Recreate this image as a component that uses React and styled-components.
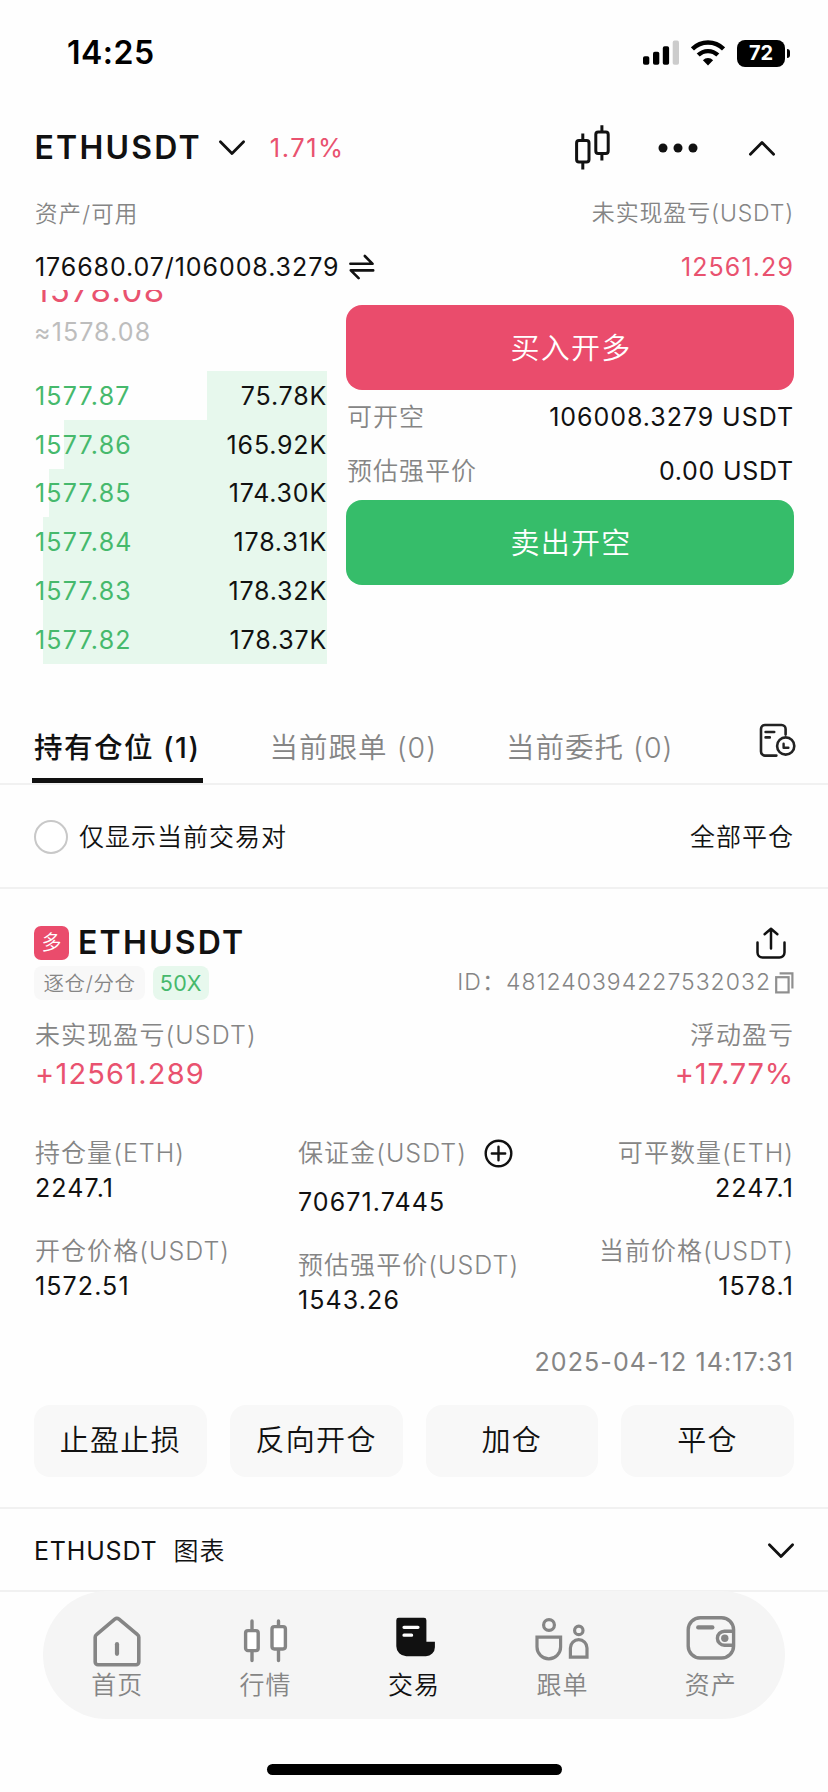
import React, { useState } from "react";
import styled, { createGlobalStyle } from "styled-components";

const bids = [
    { price: "1577.87", amount: "75.78K", depth: 120 },
    { price: "1577.86", amount: "165.92K", depth: 263.5 },
    { price: "1577.85", amount: "174.30K", depth: 278 },
    { price: "1577.84", amount: "178.31K", depth: 284 },
    { price: "1577.83", amount: "178.32K", depth: 284 },
    { price: "1577.82", amount: "178.37K", depth: 284 },
];

const tabs = ["持有仓位 (1)", "当前跟单 (0)", "当前委托 (0)"];

const actions = ["止盈止损", "反向开仓", "加仓", "平仓"];

const Chevron = ({ up }) => (
    <svg width="28" height="18" viewBox="0 0 28 18" fill="none" stroke="#111" strokeWidth="2.8" strokeLinecap="round" strokeLinejoin="round">
        <path d={up ? "M2.4 15.2L14 3.4L25.6 15.2" : "M2.4 2.8L14 14.6L25.6 2.8"} />
    </svg>
);

const SignalIcon = () => (
    <svg width="36" height="26" viewBox="0 0 36 26">
        <rect x="0" y="16.3" width="6.3" height="8.4" rx="1.8" />
        <rect x="10" y="11.7" width="6.3" height="13" rx="1.8" />
        <rect x="19.8" y="6.2" width="6.3" height="18.5" rx="1.8" />
        <rect x="29.7" y="0.6" width="6.3" height="24.1" rx="1.8" fill="#ccc" />
    </svg>
);

const WifiIcon = () => (
    <svg width="34" height="26" viewBox="0 0 34 26" fill="none" stroke="#000" strokeWidth="4.3">
        <path d="M1.5 8.9a22 22 0 0 1 31 0" />
        <path d="M7.2 15.1a13.9 13.9 0 0 1 19.6 0" />
        <path d="M17 25.4L11.9 20.2a7.2 7.2 0 0 1 10.2 0z" fill="#000" stroke="none" />
    </svg>
);

const KlineIcon = () => (
    <svg width="36" height="46" viewBox="0 0 36 46" fill="none" stroke="#111" strokeWidth="3" strokeLinejoin="round">
        <rect x="2.6" y="15.6" width="12.4" height="21.4" rx="2.4" />
        <path d="M8.8 8.6v7M8.8 37v7.4M27.9 0.2v6.8M27.9 28.4v7.2" />
        <rect x="21.8" y="7" width="12.4" height="21.4" rx="2.4" />
    </svg>
);

const DotsIcon = () => (
    <svg width="40" height="10" viewBox="0 0 40 10" fill="#111">
        <circle cx="5" cy="5" r="4.5" />
        <circle cx="20" cy="5" r="4.5" />
        <circle cx="35" cy="5" r="4.5" />
    </svg>
);

const SwapIcon = () => (
    <svg width="26" height="26" viewBox="0 0 26 26" fill="none" stroke="#111" strokeWidth="2.6" strokeLinecap="round" strokeLinejoin="round">
        <path d="M1.4 9.8H23.6L15.8 2" />
        <path d="M24.2 16.4H1.8L9.6 24.2" />
    </svg>
);

const HistoryIcon = () => (
    <svg width="37" height="35" viewBox="0 0 37 35" fill="none" stroke="#222" strokeWidth="2.6" strokeLinecap="round" strokeLinejoin="round">
        <path d="M17.4 32.6H6a4 4 0 0 1-4-4V6a4 4 0 0 1 4-4h16.6a4 4 0 0 1 4 4v5.6" />
        <path d="M6.6 9h8.6M6.6 14.4h4.2" />
        <circle cx="26.7" cy="23" r="8.6" />
        <path d="M24.6 20.8v4h4.8" strokeWidth="2.4" />
    </svg>
);

const ShareIcon = () => (
    <svg width="30" height="33" viewBox="0 0 30 33" fill="none" stroke="#111" strokeWidth="2.5" strokeLinecap="round" strokeLinejoin="round">
        <path d="M1.5 15.4v10.2a5 5 0 0 0 5 5h17a5 5 0 0 0 5-5V15.4" />
        <path d="M15 21.4V2.2M8.6 7.2L15 1.8L21.4 7.2" />
    </svg>
);

const CopyIcon = () => (
    <svg width="19" height="22" viewBox="0 0 19 22" fill="none" stroke="#8f8f8f" strokeWidth="2.2">
        <rect x="1.2" y="5.2" width="12.4" height="15.2" />
        <path d="M4.6 1.4H17.4V16.6" />
    </svg>
);

const PlusIcon = () => (
    <svg width="29" height="29" viewBox="0 0 29 29" fill="none" stroke="#111" strokeWidth="2.4" strokeLinecap="round">
        <circle cx="14.5" cy="14.5" r="12.8" />
        <path d="M7.8 14.5h13.4M14.5 7.8v13.4" />
    </svg>
);

const HomeIcon = () => (
    <svg width="48" height="52" viewBox="0 0 48 52" fill="none" stroke="#858585" strokeWidth="3.6" strokeLinejoin="round" strokeLinecap="round">
        <path d="M2.2 22.4a3.4 3.4 0 0 1 1.3-2.7L21.8 4.2a3.2 3.2 0 0 1 4.2 0L44.5 19.7a3.4 3.4 0 0 1 1.3 2.7v24.6a2.8 2.8 0 0 1-2.8 2.8H5a2.8 2.8 0 0 1-2.8-2.8z" />
        <path d="M24 29.2v9.6" strokeWidth="4.2" />
    </svg>
);

const MarketIcon = () => (
    <svg width="48" height="52" viewBox="0 0 48 52" fill="#fff" stroke="#858585" strokeWidth="3.4">
        <path d="M10 6v10M10 36v9.6M36.5 6v6M36.5 35v10.6" strokeLinecap="round" />
        <rect x="3.6" y="15.6" width="12.6" height="20" rx="2.4" />
        <rect x="30" y="11.6" width="13.4" height="22.4" rx="2.4" />
    </svg>
);

const TradeIcon = () => (
    <svg width="48" height="52" viewBox="0 0 48 52" fill="#111">
        <path d="M6.3 5.2a2.4 2.4 0 0 1 2.4-2.4H34a2.4 2.4 0 0 1 2.4 2.4v21.6h8.5v5.4a9 9 0 0 1-9 9H16.3a10 10 0 0 1-10-10z" />
        <path d="M14 12.3h14M14 20.2h7.6" stroke="#fff" strokeWidth="3.2" strokeLinecap="round" />
    </svg>
);

const FollowIcon = () => (
    <svg width="54" height="52" viewBox="0 0 54 52" fill="none" stroke="#858585" strokeWidth="3.2">
        <circle cx="14" cy="10" r="5.4" />
        <path d="M2 22.2H25.6V32a11.8 11.8 0 0 1-23.6 0z" />
        <circle cx="43.8" cy="15.4" r="4.2" />
        <path d="M35.4 42.2V33a8.3 8.3 0 0 1 16.6 0v9.2z" />
    </svg>
);

const WalletIcon = () => (
    <svg width="50" height="52" viewBox="0 0 50 52" fill="none" stroke="#858585" strokeWidth="3.4">
        <rect x="2.2" y="2.8" width="45.4" height="40.2" rx="12" />
        <path d="M12.2 12.4h14.2" strokeWidth="4.2" strokeLinecap="round" />
        <path d="M47.6 16.2H38.4a7 7 0 0 0 0 14h9.2" />
        <circle cx="38.8" cy="23.2" r="3.7" fill="#858585" stroke="none" />
    </svg>
);

const navItems = [
    { label: "首页", Icon: HomeIcon },
    { label: "行情", Icon: MarketIcon },
    { label: "交易", Icon: TradeIcon },
    { label: "跟单", Icon: FollowIcon },
    { label: "资产", Icon: WalletIcon },
];

const App = () => {
    const [tab, setTab] = useState(0);
    const [nav, setNav] = useState(2);
    const [onlyPair, setOnlyPair] = useState(false);

    return (
        <>
            <GlobalStyle />
            <Screen>
                <StatusBar>
                    <Clock>14:25</Clock>
                    <div className="icons">
                        <SignalIcon />
                        <WifiIcon />
                        <Battery>72</Battery>
                    </div>
                </StatusBar>

                <Header>
                    <Pair>ETHUSDT</Pair>
                    <Chevron />
                    <Change>1.71%</Change>
                    <div className="tools">
                        <KlineIcon />
                        <DotsIcon />
                        <Chevron up />
                    </div>
                </Header>

                <AssetLabels>
                    <Text $size={22.5} $ls={1.1} $gray className="left">资产/可用</Text>
                    <Text $size={23} $ls={0.85} $gray>未实现盈亏(USDT)</Text>
                </AssetLabels>
                <AssetValues>
                    <div className="total">
                        <Value $ls={0.92}>176680.07/106008.3279</Value>
                        <SwapIcon />
                    </div>
                    <Value $ls={1.1} $color="#e9526f">12561.29</Value>
                </AssetValues>

                <Trade>
                    <Book>
                        <LastPrice>1578.08</LastPrice>
                        <IndexPrice>≈1578.08</IndexPrice>
                        {bids.map(({ price, amount, depth }) => (
                            <Bid key={price}>
                                <Depth style={{ width: depth }} />
                                <Value $ls={1.2} $color="#46b96c">{price}</Value>
                                <Value $ls={0.8}>{amount}</Value>
                            </Bid>
                        ))}
                    </Book>
                    <Order>
                        <OrderButton $color="#ea4c6c">买入开多</OrderButton>
                        <OrderInfo>
                            <Text $gray>可开空</Text>
                            <Value $ls={0.95}>106008.3279 USDT</Value>
                        </OrderInfo>
                        <OrderInfo>
                            <Text $gray>预估强平价</Text>
                            <Value $ls={0.75}>0.00 USDT</Value>
                        </OrderInfo>
                        <OrderButton $color="#36bd6a" className="sell">卖出开空</OrderButton>
                    </Order>
                </Trade>

                <Tabs>
                    {tabs.map((t, i) => (
                        <Tab key={t} $active={tab === i} onClick={() => setTab(i)}>{t}</Tab>
                    ))}
                    <HistoryIcon />
                </Tabs>

                <Filter>
                    <Radio $on={onlyPair} onClick={() => setOnlyPair(!onlyPair)} />
                    <Text>仅显示当前交易对</Text>
                    <Text className="close_all">全部平仓</Text>
                </Filter>

                <Position>
                    <TitleRow>
                        <Side>多</Side>
                        <Pair>ETHUSDT</Pair>
                        <ShareIcon />
                    </TitleRow>
                    <TagRow>
                        <Tag>逐仓/分仓</Tag>
                        <Tag $green>50X</Tag>
                        <div className="order_id">
                            <Text $size={23} $ls={1} $gray>ID：481240394227532032</Text>
                            <CopyIcon />
                        </div>
                    </TagRow>
                    <Spread className="pnl_label">
                        <Text $ls={1.1} $gray>未实现盈亏(USDT)</Text>
                        <Text $gray>浮动盈亏</Text>
                    </Spread>
                    <Spread>
                        <Profit $ls={1.2}>+12561.289</Profit>
                        <Profit $ls={0.8}>+17.77%</Profit>
                    </Spread>
                    <Stats>
                        <div className="col first">
                            <Label>持仓量(ETH)</Label>
                            <Stat>2247.1</Stat>
                            <Label>开仓价格(USDT)</Label>
                            <Stat>1572.51</Stat>
                        </div>
                        <div className="col middle">
                            <Label>保证金(USDT)<PlusIcon /></Label>
                            <Stat $gap>70671.7445</Stat>
                            <Label>预估强平价(USDT)</Label>
                            <Stat>1543.26</Stat>
                        </div>
                        <div className="col last">
                            <Label>可平数量(ETH)</Label>
                            <Stat>2247.1</Stat>
                            <Label>当前价格(USDT)</Label>
                            <Stat>1578.1</Stat>
                        </div>
                    </Stats>
                    <OpenTime>2025-04-12 14:17:31</OpenTime>
                    <Actions>
                        {actions.map((a) => <button key={a}>{a}</button>)}
                    </Actions>
                </Position>

                <ChartRow>
                    <Value $ls={0.8}>ETHUSDT</Value>
                    <Text>图表</Text>
                    <Chevron />
                </ChartRow>

                <NavBar>
                    {navItems.map(({ label, Icon }, i) => (
                        <NavItem key={label} $active={nav === i} onClick={() => setNav(i)}>
                            <Icon />
                            {label}
                        </NavItem>
                    ))}
                </NavBar>
                <HomeIndicator />
            </Screen>
        </>
    );
};

const GlobalStyle = createGlobalStyle`
*{
    box-sizing: border-box;
}
body{
    margin: 0;
    background-color: #fefefe;
}
button{
    border: none;
    padding: 0;
    background: none;
    font: inherit;
    color: inherit;
    cursor: pointer;
}
svg{
    display: block;
    flex-shrink: 0;
}
`;

const Screen = styled.div`
display: flex;
flex-direction: column;
width: 828px;
height: 1792px;
overflow: hidden;
font-family: Inter, "Noto Sans CJK SC", sans-serif;
line-height: 1.2;
color: #111;
background-color: #fefefe;
`;

const Text = styled.span`
font-size: ${({ $size }) => $size || 25}px;
font-weight: 350;
letter-spacing: ${({ $ls }) => $ls || 1}px;
color: ${({ $gray }) => ($gray ? "#858585" : "#111")};
white-space: nowrap;
`;

const Value = styled.span`
font-size: 25px;
letter-spacing: ${({ $ls }) => $ls}px;
color: ${({ $color }) => $color || "#111"};
white-space: nowrap;
`;

const StatusBar = styled.div`
display: flex;
align-items: center;
justify-content: space-between;
height: 106px;
padding: 0 43px 0 67px;
color: #000;
.icons{
    display: flex;
    align-items: center;
    gap: 12px;
}
`;

const Clock = styled.span`
padding-top: 1px;
font-size: 32px;
font-weight: 600;
letter-spacing: 0.5px;
`;

const Battery = styled.div`
position: relative;
width: 48px;
height: 27px;
border-radius: 8px;
background-color: #000;
color: #fff;
font-size: 20px;
font-weight: 700;
line-height: 27px;
text-align: center;
&::after{
    content: "";
    position: absolute;
    left: 50px;
    top: 9px;
    width: 3px;
    height: 9px;
    border-radius: 0 4px 4px 0;
    background-color: #000;
}
`;

const Header = styled.div`
display: flex;
align-items: center;
height: 84px;
padding: 0 52px 0 34.5px;
.tools{
    display: flex;
    align-items: center;
    margin-left: auto;
    gap: 50px;
}
.tools svg:first-child{
    margin-right: -2px;
}
> svg{
    margin: 0 24px 0 16px;
}
`;

const Pair = styled.span`
font-size: 32px;
font-weight: 600;
letter-spacing: 2.2px;
`;

const Change = styled.span`
padding-top: 1px;
font-size: 25.5px;
letter-spacing: 1.5px;
color: #e9526f;
`;

const AssetLabels = styled.div`
display: flex;
align-items: center;
justify-content: space-between;
height: 47px;
padding: 1px 34px 0 35px;
.left{
    padding-bottom: 2px;
}
`;

const AssetValues = styled.div`
display: flex;
align-items: center;
justify-content: space-between;
height: 53px;
padding: 6px 34px 0 35px;
.total{
    display: flex;
    align-items: center;
    gap: 10px;
}
`;

const Trade = styled.div`
display: flex;
gap: 19px;
height: 410px;
padding: 0 34px;
overflow: hidden;
`;

const Book = styled.div`
width: 293px;
`;

const LastPrice = styled.div`
margin-top: -18px;
padding-left: 1px;
font-size: 33px;
line-height: 36px;
letter-spacing: 1.3px;
color: #e9526f;
`;

const IndexPrice = styled.div`
margin-bottom: 15px;
font-size: 25px;
line-height: 48px;
letter-spacing: 1.1px;
color: #bdbdbd;
`;

const Bid = styled.div`
position: relative;
display: flex;
align-items: center;
justify-content: space-between;
height: 48.75px;
padding: 1px 0 0 1px;
span{
    position: relative;
}
`;

// depth bar sits behind the price and the amount
const Depth = styled.div`
position: absolute;
top: 0;
right: 0;
bottom: 0;
background-color: #e7f8ed;
`;

const Order = styled.div`
flex: 1;
padding-top: 15px;
.sell{
    margin-top: 2px;
}
`;

const OrderButton = styled.button`
display: block;
width: 100%;
height: 85px;
padding: 4px 0 0 2px;
border-radius: 16px;
background-color: ${({ $color }) => $color};
color: #fff;
font-size: 29px;
font-weight: 350;
letter-spacing: 1.3px;
`;

const OrderInfo = styled.div`
display: flex;
align-items: center;
justify-content: space-between;
height: 54px;
padding-left: 1px;
`;

const Tabs = styled.div`
display: flex;
gap: 65px;
height: 85px;
padding: 0 32px;
border-bottom: 2px solid #f1f1f1;
svg{
    margin: 23px 0 0 auto;
}
`;

const Tab = styled.button`
position: relative;
padding: 13px 2px 0;
font-size: 28.5px;
font-weight: ${({ $active }) => ($active ? 500 : 350)};
letter-spacing: ${({ $active }) => ($active ? 1.5 : 1)}px;
color: ${({ $active }) => ($active ? "#111" : "#858585")};
white-space: nowrap;
&::after{
    content: "";
    position: absolute;
    left: 0;
    right: 0;
    bottom: 0;
    height: 5px;
    background-color: ${({ $active }) => ($active ? "#111" : "transparent")};
}
`;

const Filter = styled.div`
display: flex;
align-items: center;
height: 104px;
padding: 2px 34px 0;
border-bottom: 2px solid #f1f1f1;
.close_all{
    margin-left: auto;
}
`;

const Radio = styled.button`
width: 34px;
height: 34px;
margin-right: 11px;
border: 2.5px solid #c8c8c8;
border-radius: 50%;
background-color: ${({ $on }) => ($on ? "#36bd6a" : "#fff")};
`;

const Position = styled.div`
height: 620px;
padding: 34px 34px 0;
border-bottom: 2px solid #f1f1f1;
.pnl_label{
    height: 40px;
    margin-top: 12px;
}
`;

const TitleRow = styled.div`
display: flex;
align-items: center;
height: 40px;
svg{
    margin: 0 8px 0 auto;
}
`;

const Side = styled.div`
width: 35px;
height: 34px;
margin-right: 9px;
border-radius: 7px;
background-color: #ea4c6c;
color: #fff;
font-size: 20px;
font-weight: 350;
line-height: 35px;
text-align: center;
`;

const TagRow = styled.div`
display: flex;
align-items: center;
gap: 8px;
height: 40px;
.order_id{
    display: flex;
    align-items: center;
    gap: 4px;
    margin-left: auto;
}
`;

const Tag = styled.div`
height: 34px;
padding: 0 ${({ $green }) => ($green ? 6.5 : 9.5)}px;
border-radius: 8px;
background-color: ${({ $green }) => ($green ? "#e7f8ed" : "#f8f8f8")};
color: ${({ $green }) => ($green ? "#46b96c" : "#858585")};
font-size: ${({ $green }) => ($green ? 21.5 : 20.5)}px;
font-weight: ${({ $green }) => ($green ? 400 : 350)};
line-height: 35px;
letter-spacing: 0.6px;
white-space: nowrap;
`;

const Spread = styled.div`
display: flex;
align-items: center;
justify-content: space-between;
height: 38px;
padding-left: 1px;
`;

const Profit = styled.span`
font-size: 29px;
letter-spacing: ${({ $ls }) => $ls}px;
color: #e9526f;
`;

const Stats = styled.div`
display: flex;
margin-top: 40px;
padding-left: 1px;
.col{
    display: flex;
    flex-direction: column;
}
.first{
    width: 263px;
}
.last{
    margin-left: auto;
    align-items: flex-end;
}
`;

const Label = styled.div`
display: flex;
align-items: center;
gap: 17px;
height: 40px;
font-size: 25px;
font-weight: 350;
letter-spacing: 1.05px;
color: #858585;
white-space: nowrap;
`;

const Stat = styled.div`
height: 31px;
margin-top: ${({ $gap }) => ($gap ? 14 : 0)}px;
font-size: 25px;
line-height: 31px;
letter-spacing: 1.1px;
&:not(:last-child){
    margin-bottom: 27px;
}
`;

const OpenTime = styled.div`
margin: 26px 0 23px;
font-size: 25px;
line-height: 40px;
letter-spacing: 1.1px;
text-align: right;
color: #858585;
`;

const Actions = styled.div`
display: grid;
grid-template-columns: repeat(4, 1fr);
gap: 23px;
button{
    height: 72px;
    padding-top: 1px;
    border-radius: 16px;
    background-color: #f8f8f8;
    font-size: 29px;
    font-weight: 350;
    letter-spacing: 1.3px;
}
`;

const ChartRow = styled.div`
display: flex;
align-items: center;
gap: 16px;
height: 83px;
padding: 3px 33px 0 34px;
border-bottom: 2px solid #f1f1f1;
svg{
    margin-left: auto;
}
`;

const NavBar = styled.div`
display: grid;
grid-template-columns: repeat(5, 1fr);
height: 128px;
margin: -1px 43px 0;
border-radius: 64px;
background-color: #f5f5f5;
`;

const NavItem = styled.button`
display: flex;
flex-direction: column;
align-items: center;
padding-top: 24px;
font-size: 25px;
font-weight: 350;
line-height: 36px;
letter-spacing: 1px;
color: ${({ $active }) => ($active ? "#111" : "#858585")};
`;

const HomeIndicator = styled.div`
width: 295px;
height: 11px;
margin: 45px auto 0;
border-radius: 6px;
background-color: #000;
`;

export default App;
